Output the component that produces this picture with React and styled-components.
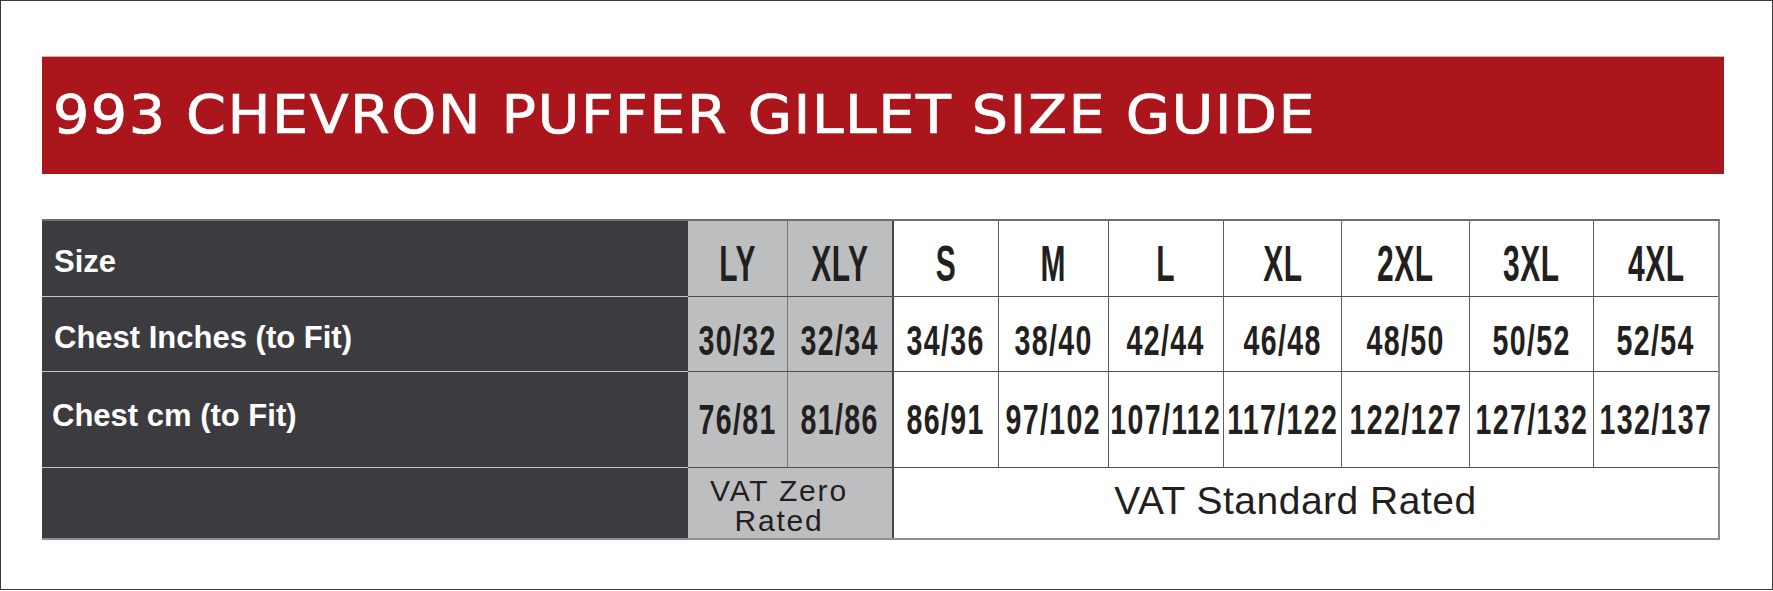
import React from 'react';
import styled, { createGlobalStyle } from 'styled-components';

const GlobalStyle = createGlobalStyle`
  html, body {
    margin: 0;
    padding: 0;
    background: #ffffff;
  }
`;

const Frame = styled.div`
  box-sizing: border-box;
  width: 1773px;
  height: 590px;
  border: 1px solid #3a3a3a;
  padding: 55px 0 0 41px;
  background: #ffffff;
`;

const Banner = styled.div`
  box-sizing: border-box;
  width: 1682px;
  height: 118px;
  background: #aa161c;
  border-top: 1px solid #d2b49c;
  display: flex;
  align-items: center;
  padding: 0 0 3px 11px;
`;

const Title = styled.h1`
  margin: 0;
  font-family: "DejaVu Sans", "Liberation Sans", sans-serif;
  font-weight: 400;
  font-size: 53px;
  line-height: 1;
  letter-spacing: 1.3px;
  color: #ffffff;
  -webkit-text-stroke: 0.7px #ffffff;
  white-space: nowrap;
  transform: scaleX(1.08);
  transform-origin: left center;
`;

const Table = styled.div`
  display: grid;
  grid-template-columns: 646px 100px 106px 105px 110px 115px 118px 128px 124px 124px;
  grid-template-rows: 76px 75px 96px 70px;
  width: fit-content;
  margin-top: 45px;
  border-top: 2px solid #6d6d70;
  border-right: 2px solid #8c8c8c;
  border-bottom: 2px solid #8f8f8f;
`;

const LabelCell = styled.div`
  box-sizing: border-box;
  display: flex;
  align-items: center;
  background: #3c3b40;
  border-bottom: ${p => (p.$last ? 'none' : '1px solid #c4c4c8')};
  padding: ${p => p.$pt || 0}px 0 ${p => p.$pb || 0}px ${p => p.$pl || 12}px;
  font-family: "Liberation Sans", Arial, sans-serif;
  font-weight: 700;
  font-size: 31px;
  line-height: 1;
  color: #ffffff;
  white-space: nowrap;
`;

const Cell = styled.div`
  box-sizing: border-box;
  grid-column: span ${p => p.$span || 1};
  display: flex;
  align-items: center;
  justify-content: center;
  background: ${p => (p.$youth ? '#bdbec0' : '#ffffff')};
  border-right: ${p =>
    p.$divider ? '2px solid #47474a' : p.$edge ? 'none' : `1px solid ${p.$youth ? '#77777a' : '#5e5e60'}`};
  border-bottom: ${p => (p.$last ? 'none' : '1px solid #4f4f52')};
  padding: ${p => p.$pt || 0}px ${p => p.$pr || 0}px ${p => p.$pb || 0}px 0;
  color: #231f20;
  overflow: visible;
`;

const SizeText = styled.span`
  display: inline-block;
  flex-shrink: 0;
  font-family: "Liberation Sans", Arial, sans-serif;
  font-weight: 700;
  font-size: 50px;
  line-height: 1;
  letter-spacing: 1px;
  white-space: nowrap;
  transform: scaleX(0.6);
`;

const MeasureText = styled.span`
  display: inline-block;
  flex-shrink: 0;
  font-family: "Liberation Sans", Arial, sans-serif;
  font-weight: 700;
  font-size: 42px;
  line-height: 1;
  letter-spacing: 2px;
  white-space: nowrap;
  transform: scaleX(0.68);
`;

const VatText = styled.span`
  font-family: "Liberation Sans", Arial, sans-serif;
  font-weight: 400;
  font-size: ${p => p.$size}px;
  line-height: ${p => p.$lh}px;
  letter-spacing: ${p => p.$ls}px;
  text-align: center;
  white-space: nowrap;
`;

const sizes = ['LY', 'XLY', 'S', 'M', 'L', 'XL', '2XL', '3XL', '4XL'];
const inches = ['30/32', '32/34', '34/36', '38/40', '42/44', '46/48', '48/50', '50/52', '52/54'];
const cms = ['76/81', '81/86', '86/91', '97/102', '107/112', '117/122', '122/127', '127/132', '132/137'];

const YOUTH = 2;

function ValueRow({ values, Text, pt }) {
  return values.map((v, i) => (
    <Cell
      key={v + i}
      $youth={i < YOUTH}
      $divider={i === YOUTH - 1}
      $edge={i === values.length - 1}
      $pt={pt}
    >
      <Text>{v}</Text>
    </Cell>
  ));
}

export default function App() {
  return (
    <>
      <GlobalStyle />
      <Frame>
        <Banner>
          <Title>993 CHEVRON PUFFER GILLET SIZE GUIDE</Title>
        </Banner>

        <Table>
          <LabelCell $pt={6}>Size</LabelCell>
          <ValueRow values={sizes} Text={SizeText} pt={11} />

          <LabelCell $pt={7}>Chest Inches (to Fit)</LabelCell>
          <ValueRow values={inches} Text={MeasureText} pt={14} />

          <LabelCell $pb={8} $pl={10}>Chest cm (to Fit)</LabelCell>
          <ValueRow values={cms} Text={MeasureText} pt={0} />

          <LabelCell $last />
          <Cell $span={YOUTH} $youth $divider $last $pt={5} $pr={22}>
            <VatText $size={30} $lh={30} $ls={1.8}>
              VAT Zero
              <br />
              Rated
            </VatText>
          </Cell>
          <Cell $span={sizes.length - YOUTH} $edge $last $pb={4} $pr={21}>
            <VatText $size={39} $lh={40} $ls={0.5}>VAT Standard Rated</VatText>
          </Cell>
        </Table>
      </Frame>
    </>
  );
}
